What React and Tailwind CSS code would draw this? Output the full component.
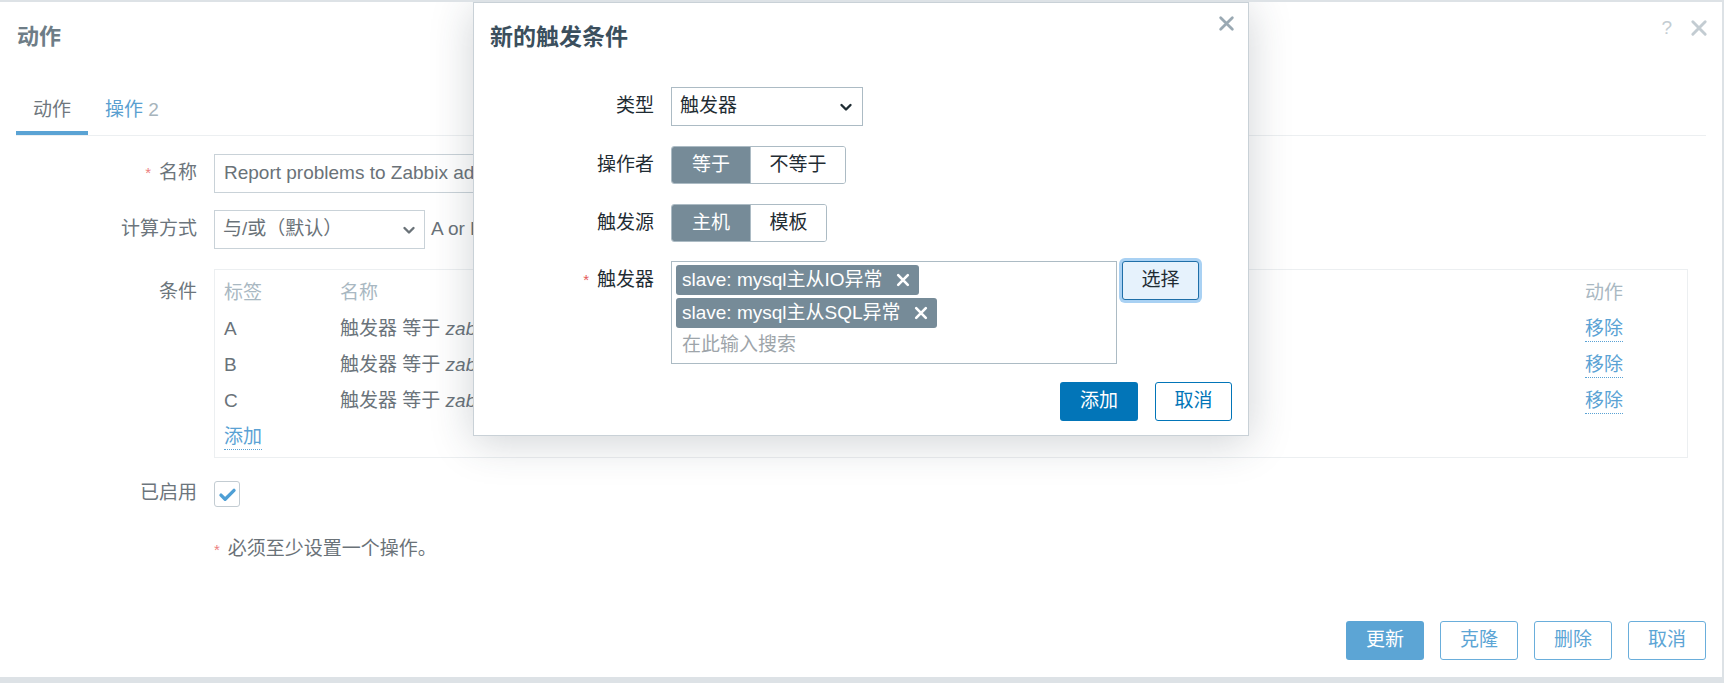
import React from 'react';

const Chevron = ({ className }) => (
  <svg viewBox="0 0 16 16" className={className} fill="none" stroke="currentColor" strokeWidth="2.4" strokeLinecap="round" strokeLinejoin="round">
    <path d="M3.5 6l4.5 4.5L12.5 6" />
  </svg>
);

const Cross = ({ className, width = 2.4 }) => (
  <svg viewBox="0 0 16 16" className={className} fill="none" stroke="currentColor" strokeWidth={width} strokeLinecap="round">
    <path d="M2.5 2.5l11 11M13.5 2.5l-11 11" />
  </svg>
);

const FormRow = ({ label, required, children, className = '', labelClass = 'items-center h-[39px]' }) => (
  <div className={`flex ${className}`}>
    <div className={`w-[197px] flex justify-end text-[19px] text-[#6c757c] ${labelClass}`}>
      {required && <span className="text-[#ec8080] mr-[8px] text-[15px]">*</span>}
      {label}
    </div>
    <div className="ml-[17px] flex-1 flex">{children}</div>
  </div>
);

const conditions = [
  { tag: 'A', name: 'zabbix: mysql主从IO异常' },
  { tag: 'B', name: 'zabbix: mysql主从SQL异常' },
  { tag: 'C', name: 'zabbix: mysql主从延迟' },
];

const ModalRow = ({ label, required, children }) => (
  <div className="flex items-start">
    <div className="w-[180px] h-[39px] flex items-center justify-end text-[19px] text-[#1f2c33]">
      {required && <span className="text-[#e45959] mr-[8px] text-[15px]">*</span>}
      {label}
    </div>
    <div className="ml-[17px] flex items-start">{children}</div>
  </div>
);

const Segmented = ({ items }) => (
  <div className="flex h-[38px] border border-[#acbbc4] rounded-[3px] overflow-hidden text-[19px]">
    {items.map((it, i) => (
      <div
        key={it.label}
        className={`flex items-center justify-center ${it.w} ${i === 0 ? 'bg-[#768b98] text-white' : 'bg-white text-[#1f2c33] border-l border-[#acbbc4]'}`}
      >
        {it.label}
      </div>
    ))}
  </div>
);

const Tag = ({ text }) => (
  <div className="inline-flex items-center h-[30px] bg-[#768b98] text-white text-[19px] rounded-[3px] pl-[6px] pr-[9px] self-start">
    <span>{text}</span>
    <Cross className="w-[14px] h-[14px] ml-[13px]" width={3} />
  </div>
);

function TriggerModal() {
  return (
    <div className="absolute top-0 left-[473px] w-[776px] h-[434px] bg-white border border-[#c9d1d7] shadow-[0_6px_40px_rgba(40,55,70,0.22)] flex flex-col">
      <div className="h-[67px] flex items-center justify-between pl-[16px] pr-[13px]">
        <div className="text-[23px] font-bold text-[#3b4f5d] mt-[1px]">新的触发条件</div>
        <Cross className="w-[17px] h-[17px] text-[#9aa9b3] self-start mt-[12px]" width={2.6} />
      </div>
      <div className="flex flex-col pt-[17px]">
        <ModalRow label="类型">
          <div className="w-[192px] h-[39px] border border-[#acbbc4] flex items-center justify-between pl-[8px] pr-[8px] text-[19px] text-[#1f2c33]">
            <span>触发器</span>
            <Chevron className="w-[16px] h-[16px] text-[#1f2c33]" />
          </div>
        </ModalRow>
        <div className="mt-[20px]">
          <ModalRow label="操作者">
            <Segmented items={[{ label: '等于', w: 'w-[78px]' }, { label: '不等于', w: 'w-[95px]' }]} />
          </ModalRow>
        </div>
        <div className="mt-[19px]">
          <ModalRow label="触发源">
            <Segmented items={[{ label: '主机', w: 'w-[78px]' }, { label: '模板', w: 'w-[76px]' }]} />
          </ModalRow>
        </div>
        <div className="mt-[18px]">
          <ModalRow label="触发器" required>
            <div className="w-[446px] h-[103px] border border-[#acbbc4] flex flex-col gap-[3px] pt-[3px] pl-[4px]">
              <Tag text="slave: mysql主从IO异常" />
              <Tag text="slave: mysql主从SQL异常" />
              <div className="text-[19px] text-[#9ea5aa] pl-[6px] leading-[28px]">在此输入搜索</div>
            </div>
            <div className="ml-[5px] w-[77px] h-[39px] rounded-[3px] border border-[#1f6fa8] bg-[#e6f2fc] ring-[3px] ring-[#a9d1f3] flex items-center justify-center text-[19px] text-[#1f2c33]">
              选择
            </div>
          </ModalRow>
        </div>
      </div>
      <div className="flex justify-end gap-[17px] mt-[18px] pr-[16px]">
        <div className="w-[78px] h-[39px] rounded-[3px] bg-[#0275b8] text-white text-[19px] flex items-center justify-center">添加</div>
        <div className="w-[77px] h-[39px] rounded-[3px] border border-[#0275b8] bg-white text-[#0275b8] text-[19px] flex items-center justify-center">取消</div>
      </div>
    </div>
  );
}

export default function App() {
  return (
    <div className="relative w-[1724px] h-[683px] bg-white border-t-2 border-b-[6px] border-r-2 border-[#dde2e6] overflow-hidden font-[family-name:Liberation_Sans,Noto_Sans_CJK_SC,sans-serif]">
      <div className="flex flex-col h-full">
        {/* header */}
        <div className="h-[68px] flex justify-between pl-[17px] pr-[14px]">
          <div className="self-center text-[22px] font-bold text-[#6e7d87]">动作</div>
          <div className="flex items-center gap-[18px] self-start mt-[12px] text-[#c3ccd2]">
            <span className="text-[19px]">?</span>
            <Cross className="w-[18px] h-[18px]" width={2.6} />
          </div>
        </div>

        {/* tabs */}
        <div className="mx-[16px] flex border-b border-[#eceff1]">
          <div className="px-[17px] pt-[29px] pb-[10px] leading-[22px] text-[19px] text-[#6f777d] border-b-[4px] border-[#5aa3d4]">动作</div>
          <div className="px-[17px] pt-[29px] pb-[14px] leading-[22px] text-[19px]">
            <span className="text-[#5a9fd0]">操作</span> <span className="text-[#a7b4bc]">2</span>
          </div>
        </div>

        {/* form */}
        <div className="flex flex-col mt-[18px]">
          <FormRow label="名称" required>
            <div className="w-[900px] h-[39px] border border-[#c9d2d8] flex items-center pl-[9px] text-[19px] text-[#6a7278]">
              Report problems to Zabbix administrators
            </div>
          </FormRow>
          <FormRow label="计算方式" className="mt-[17px]">
            <div className="w-[211px] h-[39px] border border-[#c9d2d8] flex items-center justify-between pl-[8px] pr-[7px] text-[19px] text-[#6a7278]">
              <span>与/或（默认）</span>
              <Chevron className="w-[16px] h-[16px] text-[#6a7278]" />
            </div>
            <div className="ml-[6px] h-[39px] flex items-center text-[19px] text-[#6a7278]">A or B or C</div>
          </FormRow>
          <FormRow label="条件" className="mt-[20px]" labelClass="items-center h-[36px] mt-[5px]">
            <div className="w-[1474px] h-[189px] border border-[#eceff1] pt-[5px] pl-[9px] text-[19px]">
              <div className="flex h-[36px] items-center text-[#a9b8c2]">
                <div className="w-[116px]">标签</div>
                <div className="w-[1245px]">名称</div>
                <div>动作</div>
              </div>
              {conditions.map((c) => (
                <div key={c.tag} className="flex h-[36px] items-center text-[#6a737a]">
                  <div className="w-[116px]">{c.tag}</div>
                  <div className="w-[1245px]">
                    触发器 等于 <em>{c.name}</em>
                  </div>
                  <div className="text-[#5aa2d4] border-b border-dotted border-[#5aa2d4] leading-[24px]">移除</div>
                </div>
              ))}
              <div className="flex h-[36px] items-center">
                <span className="text-[#5aa2d4] border-b border-dotted border-[#5aa2d4] leading-[24px]">添加</span>
              </div>
            </div>
          </FormRow>
          <FormRow label="已启用" className="mt-[20px]" labelClass="items-center h-[30px]">
            <div className="mt-[3px] w-[26px] h-[26px] border border-[#c3ccd2] rounded-[3px] flex items-center justify-center">
              <svg viewBox="0 0 16 16" className="w-[19px] h-[19px]" fill="none" stroke="#4e9fd5" strokeWidth="2.8" strokeLinecap="round" strokeLinejoin="round">
                <path d="M2.5 8.5l3.5 3.5 7.5-7.5" />
              </svg>
            </div>
          </FormRow>
          <div className="ml-[214px] mt-[30px] text-[19px] text-[#6a7278] leading-[22px]">
            <span className="text-[#ec8080] text-[15px] mr-[8px]">*</span>必须至少设置一个操作。
          </div>
        </div>

        {/* footer buttons */}
        <div className="mt-auto flex justify-end gap-[16px] pr-[16px] pb-[17px] text-[19px]">
          <div className="w-[78px] h-[39px] rounded-[3px] bg-[#5ca5d5] text-white flex items-center justify-center">更新</div>
          {['克隆', '删除', '取消'].map((t) => (
            <div key={t} className="w-[78px] h-[39px] rounded-[3px] border border-[#6aaedb] text-[#5ca5d5] bg-white flex items-center justify-center">{t}</div>
          ))}
        </div>
      </div>

      <TriggerModal />
    </div>
  );
}
